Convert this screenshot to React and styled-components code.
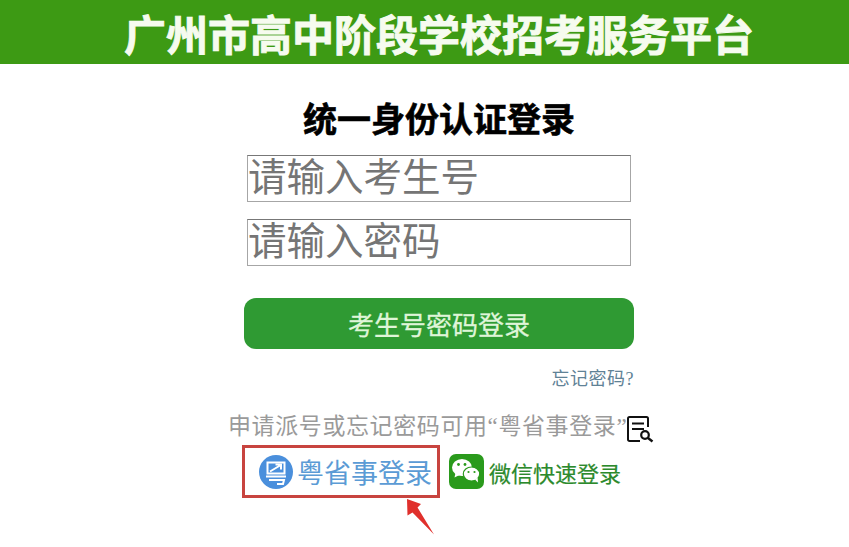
import React from "react";
import styled, { createGlobalStyle } from "styled-components";

const sans = `"Liberation Sans", "Noto Sans CJK SC", sans-serif`;
const serif = `"Liberation Serif", "Noto Sans CJK SC", serif`;

const GlobalStyle = createGlobalStyle`
  html, body {
    margin: 0;
    padding: 0;
    background: #fff;
  }
`;

function DocSearchIcon() {
  return (
    <svg width="27" height="27" viewBox="0 0 27 27" fill="none" stroke="#111" strokeWidth="2">
      <path d="M21 11V2.5a1.5 1.5 0 0 0-1.5-1.5H2.5A1.5 1.5 0 0 0 1 2.5v21A1.5 1.5 0 0 0 2.5 25H13" />
      <path d="M5 7.5h12M5 13h12" />
      <circle cx="18" cy="19" r="3.8" strokeWidth="2.2" />
      <path d="M21 22l4.5 3.5" strokeWidth="2.4" />
    </svg>
  );
}

function YssIcon() {
  return (
    <svg width="34" height="34" viewBox="0 0 34 34">
      <circle cx="17" cy="17" r="17" fill="#4a8fdc" />
      <path d="M8.5 7.5h17v11h-17z" fill="none" stroke="#fff" strokeWidth="2" />
      <path d="M11 16.5l10-6M16.5 9.5h5.5v5" fill="none" stroke="#fff" strokeWidth="2" />
      <path d="M7 21.5h20M10 25h15l-1 4h-6" fill="none" stroke="#fff" strokeWidth="2" />
    </svg>
  );
}

function WechatIcon() {
  return (
    <svg width="35" height="35" viewBox="0 0 35 35">
      <rect width="35" height="35" rx="7" fill="#2a9a1c" />
      <ellipse cx="13" cy="13.5" rx="10" ry="8.6" fill="#fff" />
      <path d="M6.5 19l-1 4.5 5-2.5z" fill="#fff" />
      <ellipse cx="22.5" cy="20" rx="8.2" ry="7" fill="#fff" stroke="#2a9a1c" strokeWidth="1.2" />
      <path d="M26 25.5l3 3-.4-5z" fill="#fff" />
      <circle cx="9.5" cy="10.5" r="1.4" fill="#2a9a1c" />
      <circle cx="16" cy="10.5" r="1.4" fill="#2a9a1c" />
      <circle cx="19.5" cy="18" r="1.1" fill="#2a9a1c" />
      <circle cx="25.5" cy="18" r="1.1" fill="#2a9a1c" />
    </svg>
  );
}

function RedArrow() {
  return (
    <svg width="30" height="37" viewBox="0 0 30 37">
      <path d="M2 1l14 5-3.5 3.500 16.500 27-21.500-22-5 3z" fill="#e0302c" />
    </svg>
  );
}

export default function App() {
  return (
    <Page>
      <GlobalStyle />
      <Header>
        <HeaderTitle>广州市高中阶段学校招考服务平台</HeaderTitle>
      </Header>
      <LoginColumn>
        <LoginTitle>统一身份认证登录</LoginTitle>
        <Field>请输入考生号</Field>
        <Field>请输入密码</Field>
        <LoginButton>考生号密码登录</LoginButton>
        <ForgotLink>忘记密码?</ForgotLink>
      </LoginColumn>
      <Notice>
        申请派号或忘记密码可用“粤省事登录”
        <DocSearchIcon />
      </Notice>
      <QuickRow>
        <YssBox>
          <YssIcon />
          <YssLabel>粤省事登录</YssLabel>
          <ArrowMark>
            <RedArrow />
          </ArrowMark>
        </YssBox>
        <WechatIcon />
        <WechatLabel>微信快速登录</WechatLabel>
      </QuickRow>
    </Page>
  );
}

const Page = styled.div`
  width: 849px;
  height: 547px;
  overflow: hidden;
  background: #fff;
  font-family: ${sans};
`;

const Header = styled.header`
  height: 64px;
  background: #3d9a14;
  display: flex;
  align-items: center;
  padding-left: 124px;
`;

const HeaderTitle = styled.h1`
  margin: 0;
  font-size: 42px;
  font-weight: 700;
  color: #f6fbef;
  white-space: nowrap;
  -webkit-text-stroke: 0.9px #f6fbef;
`;

const LoginColumn = styled.section`
  width: 390px;
  margin: 36px 0 0 244px;
  display: flex;
  flex-direction: column;
  align-items: center;
`;

const LoginTitle = styled.h2`
  margin: 0;
  height: 55px;
  line-height: 41px;
  font-size: 34px;
  font-weight: 700;
  color: #000;
  -webkit-text-stroke: 0.6px #000;
`;

const Field = styled.div`
  box-sizing: border-box;
  width: 384px;
  height: 47px;
  margin-bottom: 17px;
  border: 1px solid #a6a6a6;
  border-top-color: #777;
  font-size: 38.5px;
  line-height: 44px;
  color: #757575;
`;

const LoginButton = styled.button`
  width: 390px;
  height: 51px;
  margin-top: 15px;
  padding: 0;
  border: none;
  border-radius: 12px;
  background: #2f9a33;
  font-family: inherit;
  font-size: 26px;
  color: #dff5d8;
  -webkit-text-stroke: 0.3px #dff5d8;
`;

const ForgotLink = styled.a`
  align-self: flex-end;
  margin-top: 20px;
  font-family: ${serif};
  font-size: 18px;
  letter-spacing: 0.5px;
  line-height: 20px;
  color: #5f8296;
`;

const Notice = styled.div`
  display: flex;
  align-items: flex-start;
  margin: 24px 0 0 228px;
  height: 32px;
  font-family: ${serif};
  font-size: 23px;
  letter-spacing: 0.6px;
  line-height: 28px;
  color: #9a9a9a;
  white-space: nowrap;
  svg {
    margin-top: 3px;
  }
`;

const QuickRow = styled.div`
  display: flex;
  align-items: center;
  margin-left: 242px;
`;

const YssBox = styled.div`
  position: relative;
  box-sizing: border-box;
  width: 198px;
  height: 53px;
  padding-left: 14px;
  margin-right: 9px;
  display: flex;
  align-items: center;
  gap: 4px;
  border: 3px solid #c8443f;
`;

const YssLabel = styled.span`
  font-size: 27px;
  color: #5b9bd5;
  white-space: nowrap;
`;

const ArrowMark = styled.span`
  position: absolute;
  left: 160px;
  top: 50px;
  line-height: 0;
`;

const WechatLabel = styled.span`
  margin-left: 5px;
  font-size: 22px;
  color: #2c8a2c;
  white-space: nowrap;
  -webkit-text-stroke: 0.2px #2c8a2c;
`;
